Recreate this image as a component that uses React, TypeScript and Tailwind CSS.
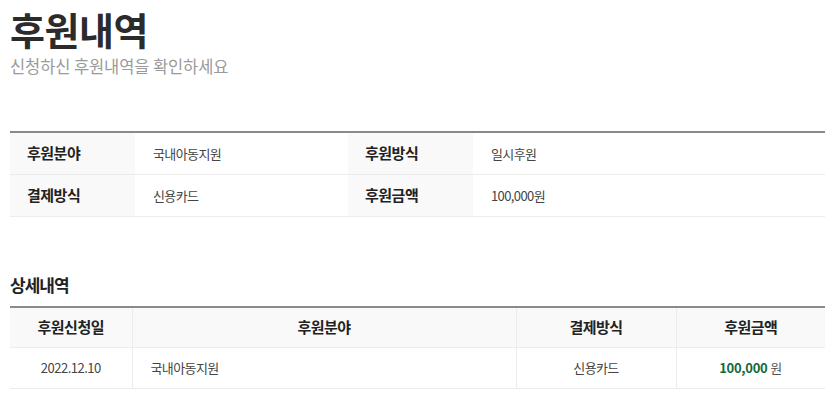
const font = { fontFamily: '"Noto Sans CJK KR", "Noto Sans", sans-serif' };

const summary = [
  [
    ['후원분야', '국내아동지원'],
    ['후원방식', '일시후원'],
  ],
  [
    ['결제방식', '신용카드'],
    ['후원금액', '100,000원'],
  ],
];

export default function App() {
  return (
    <div className="w-[835px] bg-white px-[10px] text-[#333]" style={font}>
      <h1 className="pt-[6px] text-[38px] font-bold leading-[46px] tracking-[-0.5px] text-[#2b2b2b]">
        후원내역
      </h1>
      <p className="mt-[3px] text-[16.5px] leading-[22px] tracking-[-0.1px] text-[#9a9a9a]">
        신청하신 후원내역을 확인하세요
      </p>

      <div className="mt-[54px] border-t-2 border-[#8a8a8a]">
        {summary.map((row, i) => (
          <div key={i} className="flex h-[42px] border-b border-[#ececec]">
            {row.map(([label, value], j) => (
              <div key={j} className={`flex ${j === 0 ? 'w-[338px]' : 'flex-1'}`}>
                <div className="flex w-[125px] items-center bg-[#f9f9f9] pl-[17px] text-[15px] font-bold tracking-[-0.5px] text-[#222]">
                  {label}
                </div>
                <div className="flex flex-1 items-center pl-[18px] text-[13px] tracking-[-0.6px] text-[#444]">
                  {value}
                </div>
              </div>
            ))}
          </div>
        ))}
      </div>

      <h2 className="mt-[57px] text-[17px] font-bold leading-[22px] tracking-[-1px] text-[#222]">
        상세내역
      </h2>

      <table className="mt-[10px] w-full border-collapse border-t-2 border-[#8a8a8a] text-[13px]">
        <thead>
          <tr className="h-[40px] bg-[#f9f9f9] text-[15px] font-bold tracking-[-0.5px] text-[#222]">
            <th className="w-[122px] border-b border-r border-[#ececec] font-bold">후원신청일</th>
            <th className="w-[384px] border-b border-r border-[#ececec] font-bold">후원분야</th>
            <th className="w-[160px] border-b border-r border-[#ececec] font-bold">결제방식</th>
            <th className="border-b border-[#ececec] font-bold">후원금액</th>
          </tr>
        </thead>
        <tbody>
          <tr className="h-[41px] text-[#444]">
            <td className="border-b border-r border-[#ececec] text-center tracking-[-0.5px]">2022.12.10</td>
            <td className="border-b border-r border-[#ececec] pl-[18px] tracking-[-0.6px]">국내아동지원</td>
            <td className="border-b border-r border-[#ececec] text-center tracking-[-0.6px]">신용카드</td>
            <td className="border-b border-[#ececec] text-center">
              <span className="font-bold tracking-[-0.3px] text-[#13693a]">100,000</span>
              <span className="text-[#555]"> 원</span>
            </td>
          </tr>
        </tbody>
      </table>
    </div>
  );
}
